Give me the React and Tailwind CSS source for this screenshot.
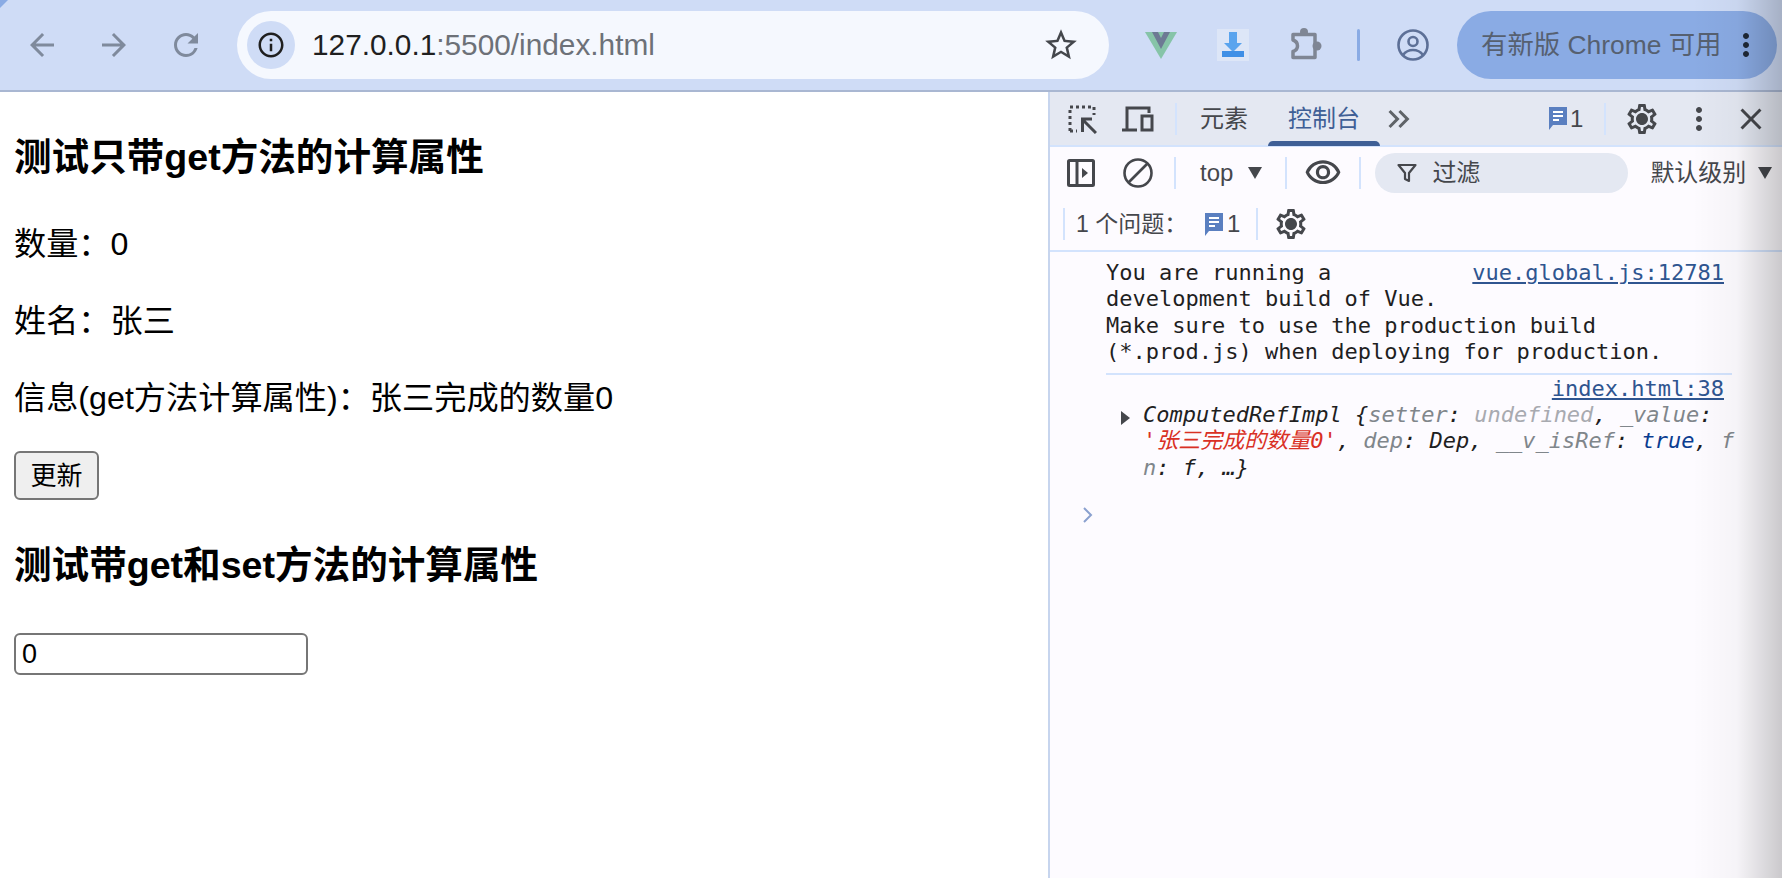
import React from "react";
import {
  MdArrowBack, MdArrowForward, MdRefresh, MdInfoOutline, MdStarBorder,
  MdMoreVert, MdClose, MdOutlineVisibility, MdOutlineSettings, MdKeyboardDoubleArrowRight,
} from "react-icons/md";

const sans = "font-['Liberation_Sans','Noto_Sans_CJK_SC',sans-serif]";
const mono = "font-['DejaVu_Sans_Mono','Noto_Sans_CJK_SC',monospace]";

function Comment({ className }) {
  return (
    <svg viewBox="0 0 20 25" className={className}>
      <path d="M1 1h18v18H5l-4 5z" fill="#5a7fc0" />
      <path d="M5 6h10M5 10h10M5 14h6" stroke="#fff" strokeWidth="2" />
    </svg>
  );
}

function Gear({ className }) {
  return (
    <span className={`relative flex items-center justify-center ${className}`}>
      <MdOutlineSettings className="w-full h-full text-[#45474c]" />
      <span className="absolute w-[9px] h-[9px] rounded-full bg-[#45474c]" />
    </span>
  );
}

function Sep({ className = "h-8" }) {
  return <div className={`w-[2px] bg-[#d3e3fd] shrink-0 ${className}`} />;
}

function Toolbar() {
  return (
    <header className="h-[92px] shrink-0 bg-[#cfdcf6] border-b-2 border-[#a9b7d2] flex items-center pl-[24px] pr-1">
      <MdArrowBack className="w-[36px] h-[36px] text-[#7f8a9c] shrink-0" />
      <MdArrowForward className="w-[36px] h-[36px] text-[#7f8a9c] shrink-0 ml-[36px]" />
      <MdRefresh className="w-[36px] h-[36px] text-[#7f8a9c] shrink-0 ml-[36px]" />
      <div className="ml-[33px] w-[872px] h-[68px] shrink-0 rounded-full bg-[#f5f8fe] flex items-center pl-[10px] pr-[29px]">
        <div className="w-[48px] h-[48px] rounded-full bg-[#cfdcf6] flex items-center justify-center shrink-0">
          <MdInfoOutline className="w-[30px] h-[30px] text-[#1f1f1f]" />
        </div>
        <div className={`ml-[17px] text-[29.8px] leading-none text-[#6d7178] flex-1 ${sans}`}>
          <span className="text-[#1f1f1f]">127.0.0.1</span>:5500/index.html
        </div>
        <MdStarBorder className="w-[38px] h-[38px] text-[#44474c] shrink-0" />
      </div>
      <svg viewBox="0 0 32 28" className="w-[32px] h-[28px] ml-[36px] shrink-0">
        <path d="M0 1h32L16 28z" fill="#86c4a8" />
        <path d="M7 1h6l3 6 3-6h6L16 18z" fill="#6d7a94" />
      </svg>
      <svg viewBox="0 0 32 32" className="w-[32px] h-[32px] ml-[40px] shrink-0">
        <rect width="32" height="32" fill="#dde6f7" />
        <path d="M12 3h8v11h5l-9 9-9-9h5z" fill="#5aa4ee" />
        <rect x="5" y="22" width="22" height="6" fill="#3f8fe6" />
      </svg>
      <svg viewBox="0 0 38 38" className="w-[38px] h-[38px] ml-[38px] shrink-0" fill="none" stroke="#7f8694" strokeWidth="3.500" strokeLinejoin="round">
        <path d="M6 8.500h22v23H6v-6c3-1 4.500-3 4.500-5.500S9 15 6 14z" />
        <circle cx="17" cy="6" r="4" fill="#7f8694" stroke="none" />
        <circle cx="30" cy="20" r="4.500" fill="#7f8694" stroke="none" />
      </svg>
      <div className="w-[3px] h-[32px] ml-[32px] rounded bg-[#8aabe4] shrink-0" />
      <svg viewBox="0 0 32 32" className="w-[32px] h-[32px] ml-[37px] shrink-0" fill="none" stroke="#5d7097" strokeWidth="2.6">
        <circle cx="16" cy="16" r="14.500" />
        <circle cx="16" cy="12.500" r="4.500" />
        <path d="M6 26c3-4 6-5 10-5s7 1 10 5" />
      </svg>
      <div className="ml-[28px] w-[320px] h-[68px] shrink-0 rounded-full bg-[#8aabe4] flex items-center pl-[24px]">
        <span className={`text-[26.4px] leading-none text-[#566070] w-[250px] whitespace-nowrap ${sans}`}>有新版 Chrome 可用</span>
        <MdMoreVert className="w-[36px] h-[36px] text-[#1f2937] -ml-[3px]" />
      </div>
    </header>
  );
}

function DevTools() {
  return (
    <aside className={`flex-1 min-w-0 border-l-2 border-[#c7d5ee] bg-[#fdfbff] flex flex-col text-[#45474c] ${sans}`}>
      <div className="h-[55px] bg-[#e4e8f2] border-b-2 border-[#d3e3fd] flex items-center pl-[17px]">
        <svg viewBox="0 0 30 30" className="w-[30px] h-[30px] shrink-0" fill="none" stroke="#45474c" strokeWidth="3">
          <path d="M3 27V3h24v8M3 27h7" strokeDasharray="3 3" />
          <path d="M14 15h11M15.500 14v14M15.500 15.500L29 29" />
        </svg>
        <svg viewBox="0 0 32 26" className="w-[32px] h-[26px] ml-[25px] shrink-0" fill="none" stroke="#45474c" strokeWidth="3">
          <path d="M0 24h15M5 24V2h22v5" />
          <rect x="20" y="10" width="10" height="14" />
        </svg>
        <Sep className="h-[32px] ml-[21px]" />
        <span className="ml-[23px] text-[24px] leading-none">元素</span>
        <div className="ml-[20px] w-[112px] self-stretch relative flex items-center justify-center text-[#3f5f96] text-[24px] leading-none">
          控制台
          <div className="absolute left-0 right-0 -bottom-[1px] h-[5px] rounded-t-md bg-[#3f5f96]" />
        </div>
        <MdKeyboardDoubleArrowRight className="w-[36px] h-[36px] ml-[1px] text-[#5f6368] shrink-0" />
        <Comment className="w-[20px] h-[25px] ml-[131px] shrink-0" />
        <span className="ml-[2px] text-[24px] leading-none w-[12px]">1</span>
        <Sep className="h-[32px] ml-[22px]" />
        <Gear className="w-[36px] h-[36px] ml-[18px] shrink-0" />
        <MdMoreVert className="w-[36px] h-[36px] ml-[21px] shrink-0" />
        <MdClose className="w-[36px] h-[36px] ml-[16px] shrink-0" />
      </div>
      <div className="h-[51px] flex items-center pl-[17px]">
        <svg viewBox="0 0 28 28" className="w-[28px] h-[28px] shrink-0" fill="none" stroke="#45474c" strokeWidth="3">
          <rect x="1.500" y="1.500" width="25" height="25" rx="1" />
          <path d="M10 2v24" />
          <path d="M15 9l6 5-6 5z" fill="#45474c" stroke="none" />
        </svg>
        <svg viewBox="0 0 30 30" className="w-[30px] h-[30px] ml-[28px] shrink-0" fill="none" stroke="#45474c" strokeWidth="2.6">
          <circle cx="15" cy="15" r="13.500" />
          <path d="M24.500 5.500l-19 19" />
        </svg>
        <Sep className="h-[32px] ml-[21px]" />
        <span className="ml-[24px] text-[24px] leading-none">top</span>
        <span className="ml-[15px] w-0 h-0 border-x-[7px] border-x-transparent border-t-[12px] border-t-[#45474c]" />
        <Sep className="h-[32px] ml-[23px]" />
        <MdOutlineVisibility className="w-[38px] h-[38px] ml-[17px] shrink-0" />
        <Sep className="h-[32px] ml-[17px]" />
        <div className="ml-[14px] w-[253px] h-[40px] shrink-0 rounded-full bg-[#e4e8f2] flex items-center pl-[22px]">
          <svg viewBox="0 0 20 20" className="w-[20px] h-[20px]" fill="none" stroke="#45474c" strokeWidth="2.2">
            <path d="M1.500 2h17l-6.500 8v8l-4-2v-6z" strokeLinejoin="round" />
          </svg>
          <span className="ml-[15px] text-[24px] leading-none">过滤</span>
        </div>
        <span className="ml-[22px] text-[24px] leading-none whitespace-nowrap">默认级别</span>
        <span className="ml-[12px] w-0 h-0 border-x-[7px] border-x-transparent border-t-[12px] border-t-[#45474c]" />
      </div>
      <div className="h-[54px] border-b-2 border-[#d3e3fd] flex items-center pl-[13px]">
        <Sep className="h-[32px]" />
        <span className="ml-[11px] text-[23px] leading-none whitespace-nowrap w-[128px]">1 个问题：</span>
        <Comment className="w-[20px] h-[25px] shrink-0" />
        <span className="ml-[3px] text-[24px] leading-none w-[12px]">1</span>
        <Sep className="h-[32px] ml-[17px]" />
        <Gear className="w-[36px] h-[36px] ml-[15px] shrink-0" />
      </div>
      <div className={`flex-1 text-[22px] leading-[26.4px] text-[#1f1f1f] ${mono}`}>
        <div className="ml-[56px] w-[626px] mt-[8px] pb-[7px] border-b-2 border-[#d3e3fd] whitespace-pre-wrap">
          <a className="float-right mr-[8px] underline text-[#2f5590]">vue.global.js:12781</a>
          {"You are running a development build of Vue.\nMake sure to use the production build\n(*.prod.js) when deploying for production."}
        </div>
        <div className="ml-[56px] w-[626px]">
          <div className="text-right pr-[8px] pt-[1px]"><a className="underline text-[#2f5590]">index.html:38</a></div>
          <div className="relative pl-[37px] w-[630px] italic break-all">
            <span className="absolute left-[15px] top-[9px] w-0 h-0 border-y-[7px] border-y-transparent border-l-[9px] border-l-[#45474c]" />
            ComputedRefImpl {"{"}<span className="text-[#80868b]">setter</span>: <span className="text-[#a8aab0]">undefined</span>, <span className="text-[#80868b]">_value</span>: <span className="text-[#d93025]">'张三完成的数量0'</span>, <span className="text-[#80868b]">dep</span>: Dep, <span className="text-[#80868b]">__v_isRef</span>: <span className="text-[#0b3d91]">true</span>, <span className="text-[#80868b]">fn</span>: f, …{"}"}
          </div>
        </div>
        <svg viewBox="0 0 10 16" className="w-[10px] h-[16px] ml-[33px] mt-[26px]" fill="none" stroke="#8aa0cf" strokeWidth="2">
          <path d="M1 1l7 7-7 7" />
        </svg>
      </div>
    </aside>
  );
}

function Page() {
  return (
    <main className={`w-[1048px] shrink-0 bg-white text-black pl-[14px] pt-[44px] ${sans}`}>
      <h3 className="text-[37.6px] leading-[43px] font-bold">测试只带get方法的计算属性</h3>
      <p className="text-[32.2px] leading-[37px] mt-[47px]">数量：0</p>
      <p className="text-[32.2px] leading-[37px] mt-[40px]">姓名：张三</p>
      <p className="text-[32.2px] leading-[37px] mt-[40px]">信息(get方法计算属性)：张三完成的数量0</p>
      <button className="block mt-[34px] w-[85px] h-[49px] text-[26px] leading-none bg-[#efefef] border-2 border-[#767676] rounded-[6px]">更新</button>
      <h3 className="text-[37.6px] leading-[43px] font-bold mt-[44px]">测试带get和set方法的计算属性</h3>
      <input readOnly value="0" className="block mt-[46px] w-[294px] h-[42px] text-[27px] px-[6px] bg-white border-2 border-[#767676] rounded-[6px]" />
    </main>
  );
}

export default function App() {
  return (
    <div className="relative w-[1782px] h-[878px] overflow-hidden flex flex-col bg-white">
      <Toolbar />
      <div className="flex-1 flex min-h-0">
        <Page />
        <DevTools />
      </div>
      <div className="absolute top-0 left-0 w-0 h-0 border-t-[8px] border-r-[8px] border-t-[#8aabe4] border-r-transparent" />
      <div className="absolute top-0 right-0 bottom-0 w-[90px] bg-gradient-to-r from-transparent via-black/3 to-black/20 pointer-events-none" />
    </div>
  );
}
